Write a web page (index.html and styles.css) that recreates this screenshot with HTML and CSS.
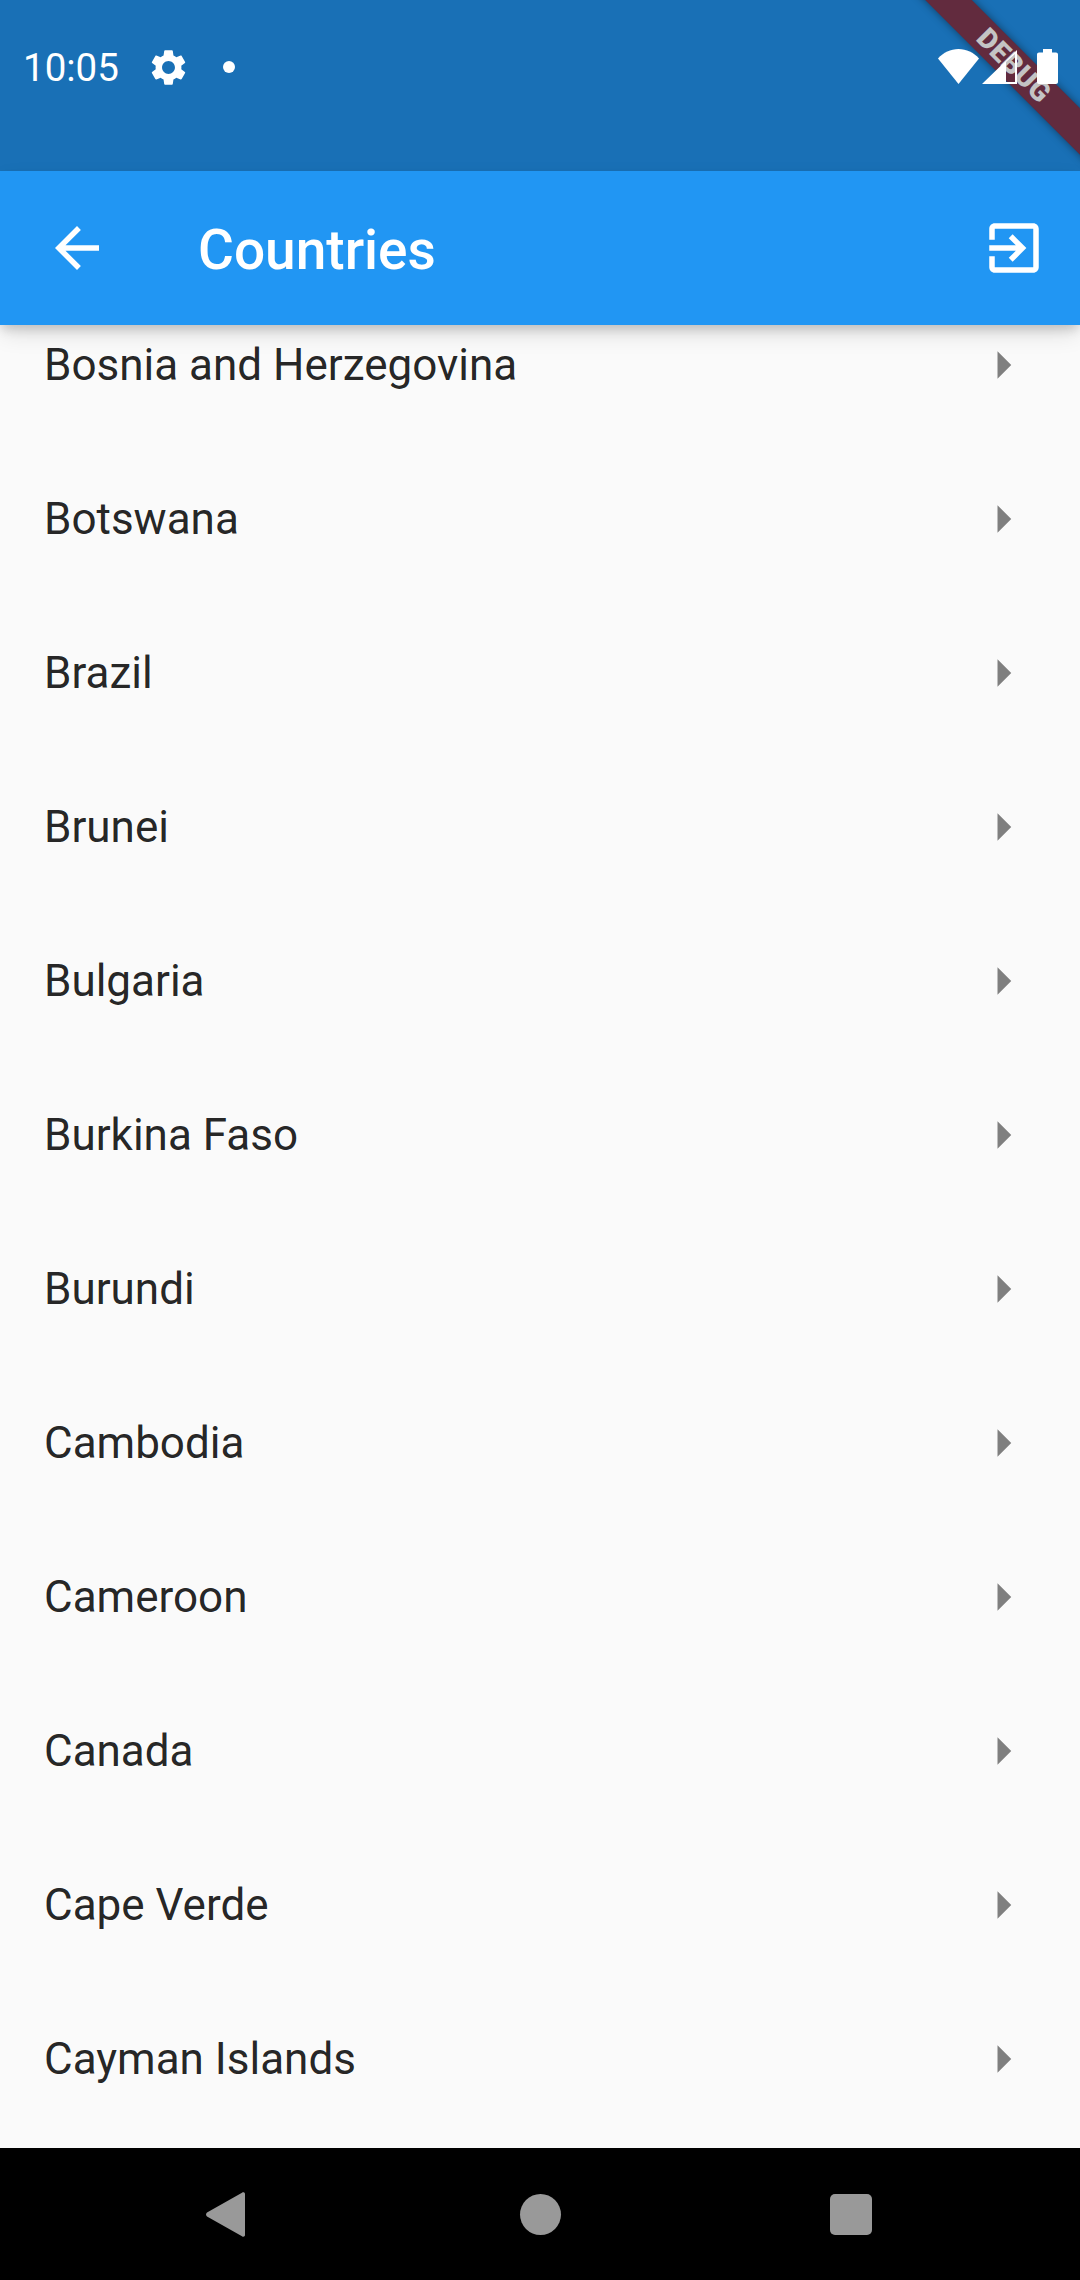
FILE: index.html
```html
<!DOCTYPE html>
<html lang="en">
<head>
<meta charset="utf-8">
<title>Countries</title>
<link rel="stylesheet" href="styles.css">
</head>
<body>
<div class="screen">
  <header class="status">
    <div class="status-left">
      <span class="clock">10:05</span>
      <svg class="gear" viewBox="0 0 24 24"><path d="M19.14 12.94c.04-.3.06-.61.06-.94 0-.32-.02-.64-.07-.94l2.03-1.58c.18-.14.23-.41.12-.61l-1.92-3.32c-.12-.22-.37-.29-.59-.22l-2.39.96c-.5-.38-1.03-.7-1.62-.94l-.36-2.54c-.04-.24-.24-.41-.48-.41h-3.84c-.24 0-.43.17-.47.41l-.36 2.54c-.59.24-1.13.57-1.62.94l-2.39-.96c-.22-.08-.47 0-.59.22L2.74 8.87c-.12.21-.08.47.12.61l2.03 1.58c-.05.3-.09.63-.09.94s.02.64.07.94l-2.03 1.58c-.18.14-.23.41-.12.61l1.92 3.32c.12.22.37.29.59.22l2.39-.96c.5.38 1.03.7 1.62.94l.36 2.54c.05.24.24.41.48.41h3.84c.24 0 .44-.17.47-.41l.36-2.54c.59-.24 1.13-.56 1.62-.94l2.39.96c.22.08.47 0 .59-.22l1.92-3.32c.12-.22.07-.47-.12-.61l-2.01-1.58zM12 15.6c-1.98 0-3.6-1.62-3.6-3.6s1.62-3.6 3.6-3.6 3.6 1.62 3.6 3.6-1.62 3.6-3.6 3.6z"/></svg>
      <span class="dot"></span>
    </div>
    <div class="status-right">
      <svg class="wifi" viewBox="0 0 41 35"><path d="M0 9.5C5.500 3.500 12.500 0 20.500 0S35.500 3.500 41 9.500L20.500 35z"/></svg>
      <svg class="signal" viewBox="0 0 35 34"><path fill-rule="evenodd" d="M0 34L35 0v34zM24 12v20h9V4z"/></svg>
      <svg class="battery" viewBox="0 0 21 35"><path d="M6 0h9v3.500h4c1.100 0 2 .9 2 2V33c0 1.100-.9 2-2 2H2c-1.100 0-2-.9-2-2V5.500c0-1.100.9-2 2-2h4z"/></svg>
    </div>
  </header>

  <div class="debug-banner"><span>DEBUG</span></div>

  <div class="appbar">
    <svg class="bar-icon" viewBox="0 0 24 24"><path d="M20 11H7.830l5.590-5.590L12 4l-8 8 8 8 1.410-1.410L7.830 13H20v-2z"/></svg>
    <h1 class="title">Countries</h1>
    <svg class="bar-icon" viewBox="0 0 24 24"><path d="M10.090 15.590L11.500 17l5-5-5-5-1.410 1.410L12.670 11H3v2h9.670l-2.580 2.590zM19 3H5c-1.110 0-2 .9-2 2v4h2V5h14v14H5v-4H3v4c0 1.100.89 2 2 2h14c1.100 0 2-.9 2-2V5c0-1.100-.9-2-2-2z"/></svg>
  </div>

  <main class="list-view">
    <ul class="list">
      <li class="row"><span>Bosnia and Herzegovina</span><svg class="chevron" viewBox="0 0 24 24"><path d="M10 17l5-5-5-5v10z"/></svg></li>
      <li class="row"><span>Botswana</span><svg class="chevron" viewBox="0 0 24 24"><path d="M10 17l5-5-5-5v10z"/></svg></li>
      <li class="row"><span>Brazil</span><svg class="chevron" viewBox="0 0 24 24"><path d="M10 17l5-5-5-5v10z"/></svg></li>
      <li class="row"><span>Brunei</span><svg class="chevron" viewBox="0 0 24 24"><path d="M10 17l5-5-5-5v10z"/></svg></li>
      <li class="row"><span>Bulgaria</span><svg class="chevron" viewBox="0 0 24 24"><path d="M10 17l5-5-5-5v10z"/></svg></li>
      <li class="row"><span>Burkina Faso</span><svg class="chevron" viewBox="0 0 24 24"><path d="M10 17l5-5-5-5v10z"/></svg></li>
      <li class="row"><span>Burundi</span><svg class="chevron" viewBox="0 0 24 24"><path d="M10 17l5-5-5-5v10z"/></svg></li>
      <li class="row"><span>Cambodia</span><svg class="chevron" viewBox="0 0 24 24"><path d="M10 17l5-5-5-5v10z"/></svg></li>
      <li class="row"><span>Cameroon</span><svg class="chevron" viewBox="0 0 24 24"><path d="M10 17l5-5-5-5v10z"/></svg></li>
      <li class="row"><span>Canada</span><svg class="chevron" viewBox="0 0 24 24"><path d="M10 17l5-5-5-5v10z"/></svg></li>
      <li class="row"><span>Cape Verde</span><svg class="chevron" viewBox="0 0 24 24"><path d="M10 17l5-5-5-5v10z"/></svg></li>
      <li class="row"><span>Cayman Islands</span><svg class="chevron" viewBox="0 0 24 24"><path d="M10 17l5-5-5-5v10z"/></svg></li>
    </ul>
  </main>

  <nav class="navbar">
    <svg class="nav-back" viewBox="0 0 39 45"><path d="M36 .8c1.300-1.100 3-.3 3 1.200v41c0 1.500-1.700 2.300-3 1.200L1 24.500c-1.300-1.100-1.300-2.900 0-4z"/></svg>
    <span class="nav-home"></span>
    <span class="nav-recent"></span>
  </nav>
</div>
</body>
</html>
```

FILE: styles.css
```css
* { box-sizing: border-box; }

html, body {
  margin: 0;
  padding: 0;
}

.screen {
  position: relative;
  width: 1080px;
  height: 2280px;
  display: flex;
  flex-direction: column;
  overflow: hidden;
  background: #fafafa;
  font-family: Roboto, "Liberation Sans", sans-serif;
}

.status {
  flex: 0 0 171px;
  display: flex;
  justify-content: space-between;
  align-items: flex-start;
  background: #1970b6;
  fill: #fff;
  color: #fff;
  padding: 49px 22px 0 23px;
}

.status-left {
  display: flex;
  align-items: center;
  height: 36px;
}

.clock {
  font-size: 38.5px;
  line-height: 36px;
  margin-top: 2px;
}

.gear {
  width: 43px;
  height: 43px;
  margin-left: 28px;
  flex: none;
}

.dot {
  width: 12px;
  height: 12px;
  border-radius: 50%;
  background: #fff;
  margin-left: 33px;
}

.status-right {
  position: relative;
  z-index: 2;
  display: flex;
  align-items: flex-end;
  height: 35px;
}

.wifi { width: 41px; height: 35px; display: block; }
.signal { width: 35px; height: 34px; margin-left: 3px; display: block; }
.battery { width: 21px; height: 35px; margin-left: 20px; display: block; }

.appbar {
  position: relative;
  z-index: 1;
  flex: 0 0 154px;
  display: flex;
  align-items: center;
  padding: 0 33px 0 44px;
  background: #2196f3;
  fill: #fff;
  box-shadow: 0 6px 10px -2px rgba(0, 0, 0, .16), 0 10px 22px -2px rgba(0, 0, 0, .12);
}

.bar-icon {
  width: 66px;
  height: 66px;
  flex: none;
}

.title {
  flex: 1;
  margin: 0 0 0 88px;
  padding-top: 3px;
  font-size: 55px;
  font-weight: 500;
  color: #fff;
}

.list-view {
  flex: 1;
  min-height: 0;
  overflow: hidden;
}

.list {
  list-style: none;
  margin: -37px 0 0;
  padding: 0;
}

.row {
  height: 154px;
  display: flex;
  justify-content: space-between;
  align-items: center;
  padding: 0 44px;
  font-size: 44px;
  color: rgba(0, 0, 0, .87);
}

.chevron {
  width: 66px;
  height: 66px;
  fill: rgba(0, 0, 0, .49);
  flex: none;
}

.navbar {
  flex: 0 0 132px;
  display: flex;
  align-items: center;
  padding-left: 206px;
  background: #000;
}

.nav-back { width: 39px; height: 45px; fill: #999; flex: none; }

.nav-home {
  width: 41px;
  height: 41px;
  margin-left: 275px;
  border-radius: 50%;
  background: #999;
}

.nav-recent {
  width: 42px;
  height: 41px;
  margin-left: 269px;
  border-radius: 5px;
  background: #999;
}

.debug-banner {
  position: absolute;
  z-index: 1;
  top: 49px;
  left: 864px;
  width: 300px;
  height: 33px;
  transform: rotate(45deg);
  display: flex;
  align-items: center;
  justify-content: center;
  background: #622b3e;
  box-shadow: 0 0 8px rgba(0, 0, 0, .45);
  color: #c4c4c4;
  font-size: 28px;
  font-weight: 900;
  letter-spacing: .4px;
}
```
